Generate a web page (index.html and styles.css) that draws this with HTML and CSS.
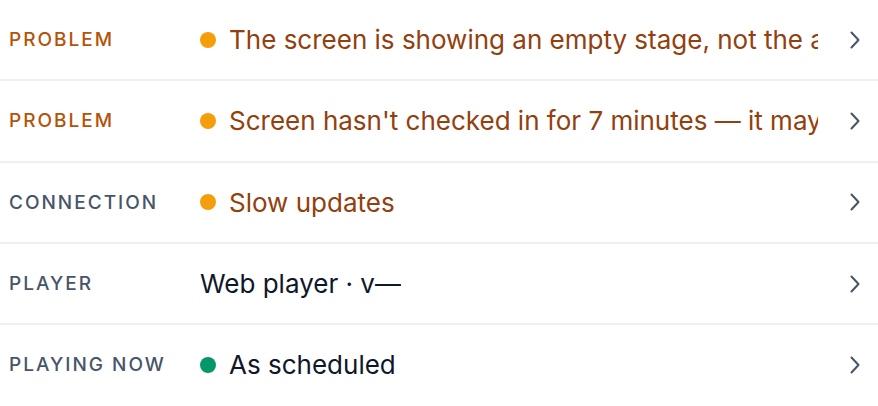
FILE: index.html
```html
<!DOCTYPE html>
<html lang="en">
<head>
    <meta charset="UTF-8">
    <meta name="viewport" content="width=device-width, initial-scale=1.0">
    <title>Screen status</title>
    <link rel="stylesheet" href="styles.css">
</head>
<body>
    <ul class="status-list">
        <li class="row">
            <span class="label warn">Problem</span>
            <span class="value warn"><span class="dot amber"></span><span class="text">The screen is showing an empty stage, not the assigned content</span></span>
            <svg class="chev" viewBox="0 0 10 18"><path d="M1.5 1.5 L8.5 9 L1.5 16.5"/></svg>
        </li>
        <li class="row">
            <span class="label warn">Problem</span>
            <span class="value warn"><span class="dot amber"></span><span class="text">Screen hasn't checked in for 7 minutes — it may be offline</span></span>
            <svg class="chev" viewBox="0 0 10 18"><path d="M1.5 1.5 L8.5 9 L1.5 16.5"/></svg>
        </li>
        <li class="row">
            <span class="label">Connection</span>
            <span class="value warn"><span class="dot amber"></span><span class="text">Slow updates</span></span>
            <svg class="chev" viewBox="0 0 10 18"><path d="M1.5 1.5 L8.5 9 L1.5 16.5"/></svg>
        </li>
        <li class="row">
            <span class="label">Player</span>
            <span class="value"><span class="text">Web player · v—</span></span>
            <svg class="chev" viewBox="0 0 10 18"><path d="M1.5 1.5 L8.5 9 L1.5 16.5"/></svg>
        </li>
        <li class="row">
            <span class="label">Playing now</span>
            <span class="value"><span class="dot green"></span><span class="text">As scheduled</span></span>
            <svg class="chev" viewBox="0 0 10 18"><path d="M1.5 1.5 L8.5 9 L1.5 16.5"/></svg>
        </li>
    </ul>
</body>
</html>
```

FILE: styles.css
```css
body {
    margin: 0;
    background: #fff;
    font-family: 'Inter', 'Noto Sans', sans-serif;
    color: #0f172a;
}
.status-list {
    list-style: none;
    margin: 0;
    padding: 0;
}
.row {
    display: flex;
    align-items: center;
    height: 79.3px;
    padding: 0 18px 0 9px;
    border-bottom: 2px solid #edf0f4;
}
.row:last-child {
    border-bottom: none;
}
.label {
    width: 191px;
    flex-shrink: 0;
    font-size: 19px;
    font-weight: 500;
    text-transform: uppercase;
    letter-spacing: 2px;
    color: #475569;
}
.label.warn {
    color: #b45309;
}
.value {
    display: flex;
    align-items: center;
    gap: 13px;
    width: 618px;
    flex-shrink: 0;
    font-size: 26px;
    color: #0f172a;
    overflow: hidden;
}
.value.warn {
    color: #92400e;
}
.text {
    white-space: nowrap;
    overflow: hidden;
}
.dot {
    width: 16px;
    height: 16px;
    border-radius: 50%;
    flex-shrink: 0;
}
.dot.amber {
    background: #f59e0b;
}
.dot.green {
    background: #059669;
}
.chev {
    width: 10px;
    height: 18px;
    margin-left: auto;
    fill: none;
    stroke: #475569;
    stroke-width: 2;
    stroke-linecap: round;
    stroke-linejoin: round;
}
```
